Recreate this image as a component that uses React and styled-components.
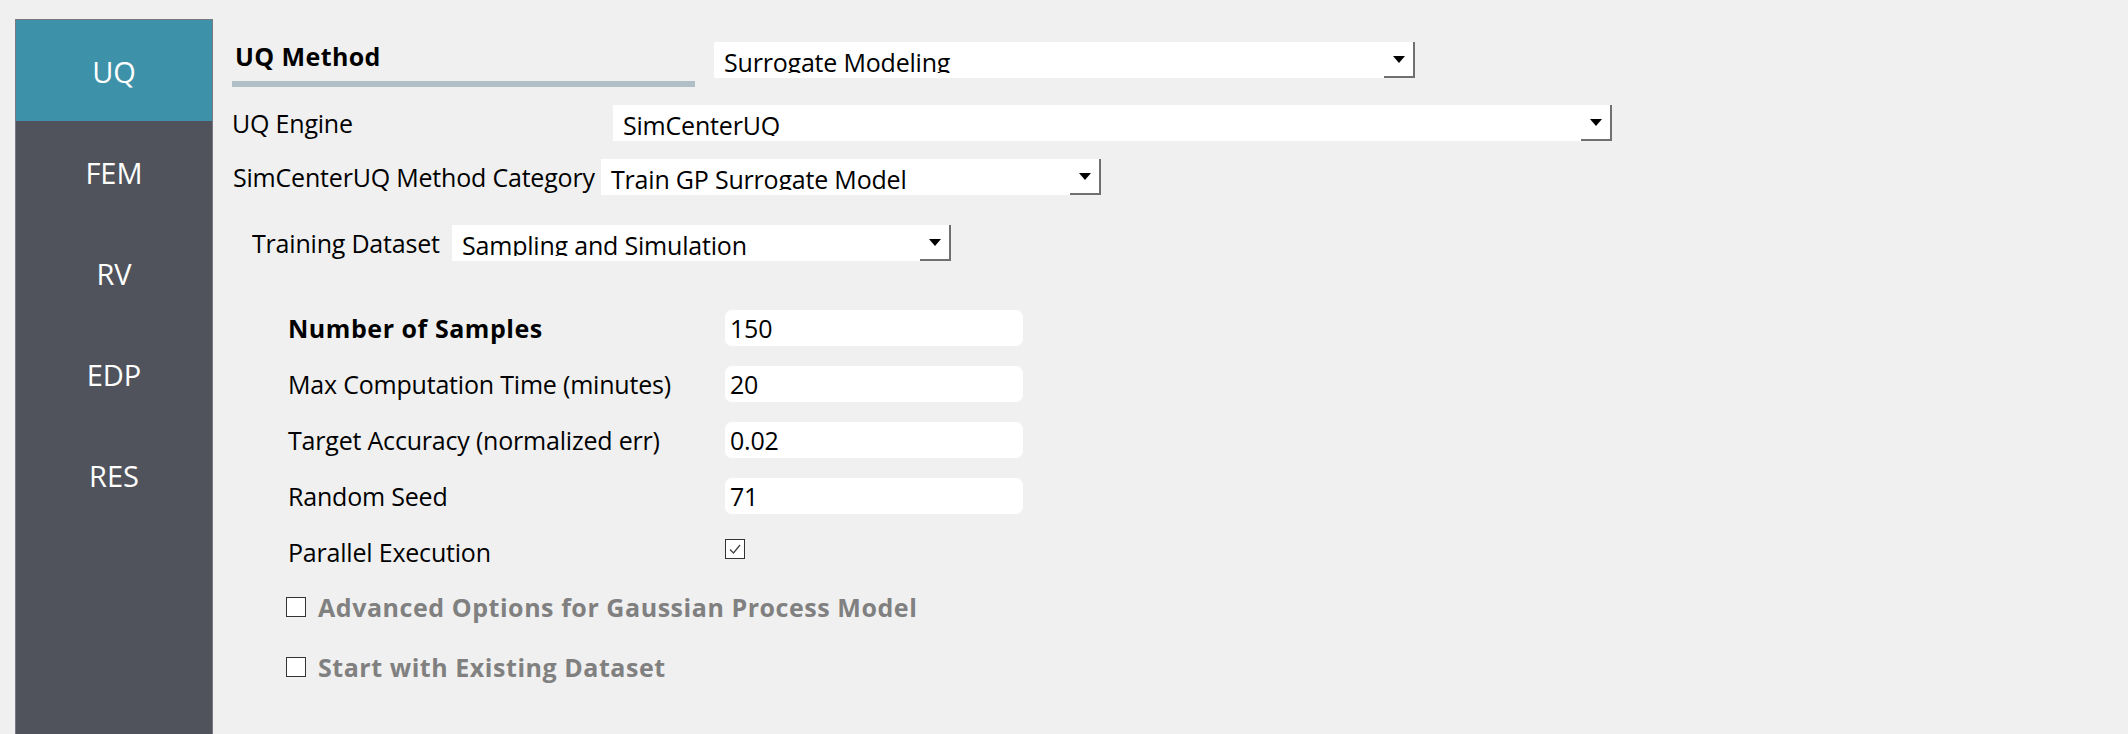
import React from 'react';
import styled, { createGlobalStyle } from 'styled-components';

const GlobalStyle = createGlobalStyle`
  html, body {
    margin: 0;
    padding: 0;
    background: #f0f0f0;
  }
  body {
    font-family: 'Open Sans', 'Liberation Sans', sans-serif;
    color: #000;
  }
`;

const Page = styled.div`
  display: flex;
  width: 2128px;
  height: 734px;
  overflow: hidden;
  background: #f0f0f0;
`;

const Sidebar = styled.nav`
  margin: 19px 0 0 15px;
  width: 196px;
  flex-shrink: 0;
  background: #50535b;
  border: 1px solid #777a80;
  border-bottom: none;
  display: flex;
  flex-direction: column;
`;

const Tab = styled.div`
  height: 101px;
  display: flex;
  align-items: center;
  justify-content: center;
  padding-top: 2px;
  box-sizing: border-box;
  background: ${(p) => (p.$active ? '#3d91a8' : 'transparent')};
  color: #fff;
  font-size: 29px;
`;

const Main = styled.main`
  padding: 42px 0 0 19px;
  display: flex;
  flex-direction: column;
`;

const HeaderRow = styled.div`
  display: flex;
  align-items: flex-start;
  gap: 19px;
`;

const TitleBlock = styled.div`
  width: 463px;
  display: flex;
  flex-direction: column;
`;

const Title = styled.div`
  font-weight: 700;
  font-size: 25px;
  letter-spacing: 0.4px;
  line-height: 28px;
  padding-left: 3px;
`;

const TitleBar = styled.div`
  margin-top: 11px;
  height: 6px;
  background: #b0bec6;
`;

const Row = styled.div`
  display: flex;
  align-items: center;
  margin-top: ${(p) => p.$top}px;
  margin-left: ${(p) => p.$indent ?? 0}px;
`;

const Label = styled.div`
  font-size: 25px;
  line-height: 36px;
  white-space: nowrap;
  flex-shrink: 0;
  width: ${(p) => (p.$width ? `${p.$width}px` : 'auto')};
  font-weight: ${(p) => (p.$bold ? 700 : 400)};
  letter-spacing: ${(p) => (p.$bold ? '0.55px' : '-0.2px')};
`;

const Select = styled.div`
  display: flex;
  width: ${(p) => p.$width}px;
  height: 36px;
  background: #fff;
  border-right: 2px solid #707070;
  box-sizing: border-box;
`;

const SelectText = styled.div`
  flex: 1;
  height: 29px;
  overflow: hidden;
  padding: 2px 0 0 10px;
  font-size: 25px;
  letter-spacing: -0.2px;
  line-height: 36px;
  white-space: nowrap;
`;

const ArrowButton = styled.div`
  width: 29px;
  height: 34px;
  border-bottom: 2px solid #707070;
  display: flex;
  align-items: center;
  justify-content: center;
`;

const Arrow = styled.div`
  width: 0;
  height: 0;
  border-left: 6px solid transparent;
  border-right: 6px solid transparent;
  border-top: 7px solid #000;
`;

const FormGrid = styled.div`
  margin: 49px 0 0 56px;
  display: grid;
  grid-template-columns: 437px 298px;
  row-gap: 20px;
  align-items: center;
`;

const Field = styled.div`
  height: 36px;
  background: #fff;
  border-radius: 7px;
  padding-left: 5px;
  font-size: 25px;
  letter-spacing: -0.2px;
  line-height: 36px;
`;

const Box = styled.div`
  width: 18px;
  height: 18px;
  border: 1px solid #333;
  background: #fff;
  display: flex;
  align-items: center;
  justify-content: center;
  flex-shrink: 0;
`;

const CheckCell = styled.div`
  height: 36px;
  display: flex;
  align-items: center;
  margin-top: -6px;
`;

const Options = styled.div`
  margin: 28px 0 0 54px;
  display: flex;
  flex-direction: column;
  gap: 42px;
`;

const Option = styled.div`
  display: flex;
  align-items: center;
  gap: 12px;
  height: 18px;
`;

const OptionText = styled.span`
  font-size: 25px;
  font-weight: 700;
  letter-spacing: 0.55px;
  color: #808080;
  white-space: nowrap;
`;

const Dropdown = ({ width, children }) => (
  <Select $width={width}>
    <SelectText>{children}</SelectText>
    <ArrowButton>
      <Arrow />
    </ArrowButton>
  </Select>
);

const Check = ({ checked }) => (
  <Box>
    {checked && (
      <svg width="14" height="14" viewBox="0 0 14 14">
        <path d="M2 7.5 L5.5 11 L12 3" fill="none" stroke="#444" strokeWidth="1.3" />
      </svg>
    )}
  </Box>
);

const tabs = ['UQ', 'FEM', 'RV', 'EDP', 'RES'];

const fields = [
  { label: 'Number of Samples', value: '150', bold: true },
  { label: 'Max Computation Time (minutes)', value: '20' },
  { label: 'Target Accuracy (normalized err)', value: '0.02' },
  { label: 'Random Seed', value: '71' },
];

export default function App() {
  return (
    <Page>
      <GlobalStyle />
      <Sidebar>
        {tabs.map((t, i) => (
          <Tab key={t} $active={i === 0}>
            {t}
          </Tab>
        ))}
      </Sidebar>
      <Main>
        <HeaderRow>
          <TitleBlock>
            <Title>UQ Method</Title>
            <TitleBar />
          </TitleBlock>
          <Dropdown width={701}>Surrogate Modeling</Dropdown>
        </HeaderRow>
        <Row $top={18}>
          <Label $width={381}>UQ Engine</Label>
          <Dropdown width={999}>SimCenterUQ</Dropdown>
        </Row>
        <Row $top={18} $indent={1}>
          <Label $width={368}>SimCenterUQ Method Category</Label>
          <Dropdown width={500}>Train GP Surrogate Model</Dropdown>
        </Row>
        <Row $top={30} $indent={20}>
          <Label $width={200}>Training Dataset</Label>
          <Dropdown width={499}>Sampling and Simulation</Dropdown>
        </Row>
        <FormGrid>
          {fields.map((f) => (
            <React.Fragment key={f.label}>
              <Label $bold={f.bold}>{f.label}</Label>
              <Field>{f.value}</Field>
            </React.Fragment>
          ))}
          <Label>Parallel Execution</Label>
          <CheckCell>
            <Check checked />
          </CheckCell>
        </FormGrid>
        <Options>
          <Option>
            <Check />
            <OptionText>Advanced Options for Gaussian Process Model</OptionText>
          </Option>
          <Option>
            <Check />
            <OptionText>Start with Existing Dataset</OptionText>
          </Option>
        </Options>
      </Main>
    </Page>
  );
}
